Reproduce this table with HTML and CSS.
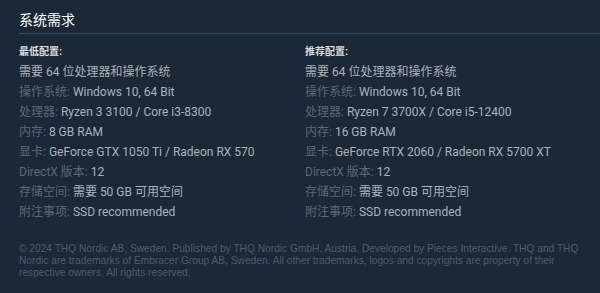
FILE: index.html
```html
<!DOCTYPE html>
<html lang="zh">
<head>
<meta charset="utf-8">
<link rel="stylesheet" href="styles.css">
</head>
<body>
<div class="page">
  <h2 class="title">系统需求</h2>
  <div class="cols">
    <div class="col">
      <div class="head">最低配置:</div>
      <ul class="list">
        <li>需要 64 位处理器和操作系统</li>
        <li><span class="lbl">操作系统:</span> Windows 10, 64 Bit</li>
        <li><span class="lbl">处理器:</span> Ryzen 3 3100 / Core i3-8300</li>
        <li><span class="lbl">内存:</span> 8 GB RAM</li>
        <li><span class="lbl">显卡:</span> GeForce GTX 1050 Ti / Radeon RX 570</li>
        <li><span class="lbl">DirectX 版本:</span> 12</li>
        <li><span class="lbl">存储空间:</span> 需要 50 GB 可用空间</li>
        <li><span class="lbl">附注事项:</span> SSD recommended</li>
      </ul>
    </div>
    <div class="col">
      <div class="head">推荐配置:</div>
      <ul class="list">
        <li>需要 64 位处理器和操作系统</li>
        <li><span class="lbl">操作系统:</span> Windows 10, 64 Bit</li>
        <li><span class="lbl">处理器:</span> Ryzen 7 3700X / Core i5-12400</li>
        <li><span class="lbl">内存:</span> 16 GB RAM</li>
        <li><span class="lbl">显卡:</span> GeForce RTX 2060 / Radeon RX 5700 XT</li>
        <li><span class="lbl">DirectX 版本:</span> 12</li>
        <li><span class="lbl">存储空间:</span> 需要 50 GB 可用空间</li>
        <li><span class="lbl">附注事项:</span> SSD recommended</li>
      </ul>
    </div>
  </div>
  <p class="legal">© 2024 THQ Nordic AB, Sweden. Published by THQ Nordic GmbH, Austria. Developed by Pieces Interactive. THQ and THQ Nordic are trademarks of Embracer Group AB, Sweden. All other trademarks, logos and copyrights are property of their respective owners. All rights reserved.</p>
</div>
</body>
</html>
```
FILE: styles.css
```css
html, body {
  margin: 0;
  padding: 0;
  background: #1b2838;
  height: 100%;
}
body {
  font-family: "Liberation Sans", Arial, "Noto Sans CJK SC", sans-serif;
}
.page {
  padding: 10px 9px 0 19px;
}
.title {
  margin: 0;
  font-size: 14px;
  font-weight: normal;
  color: #ffffff;
  line-height: 20px;
  padding-bottom: 3px;
  border-bottom: 1px solid #2b4b63;
  margin-right: -9px;
}
.cols {
  display: grid;
  grid-template-columns: 286px 1fr;
  padding-top: 11px;
}
.head {
  font-size: 10px;
  font-weight: bold;
  color: #dcdedf;
  line-height: 14px;
  margin-bottom: 3px;
}
.list {
  list-style: none;
  margin: 0;
  padding: 0;
}
.list li {
  font-family: Roboto, "Noto Sans CJK SC", sans-serif;
  font-size: 12px;
  line-height: 20px;
  color: #acb2b8;
}
.lbl {
  color: #5f6870;
}
.legal {
  margin: 21px 0 0;
  font-size: 10.2px;
  line-height: 12px;
  color: #4c5c6a;
  width: 572px;
}
```
